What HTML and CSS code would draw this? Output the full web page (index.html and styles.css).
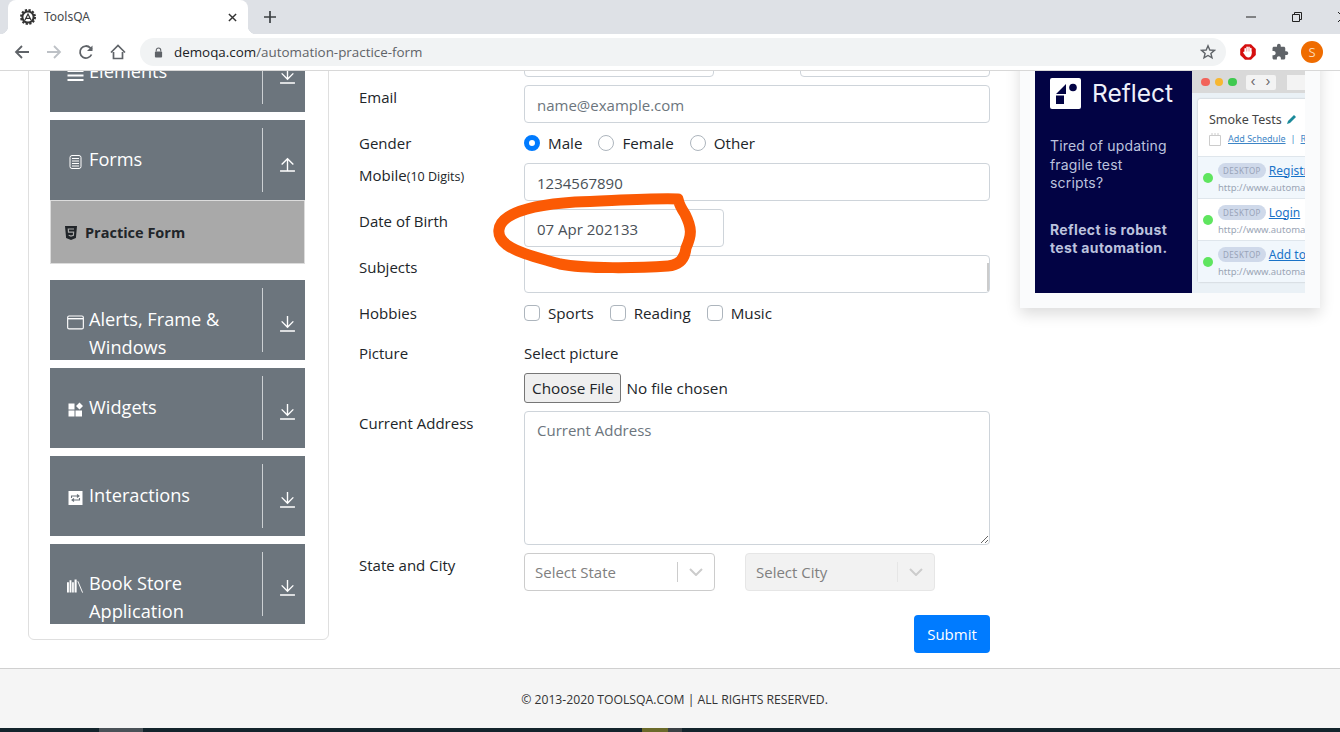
FILE: index.html
```html
<!doctype html>
<html lang="en">
<head>
	<meta charset="UTF-8">
	<title>ToolsQA</title>
	<link rel="stylesheet" href="styles.css">
</head>
<body>
	<div class="page">
		<div class="tabstrip">
			<div class="tab">
				<svg class="favicon" viewBox="0 0 16 16"><circle cx="8" cy="8" r="7" fill="none" stroke="#333" stroke-width="2" stroke-dasharray="2.2 1.5"/><circle cx="8" cy="8" r="5.6" fill="none" stroke="#333" stroke-width="2"/><path d="M5 11 8 5l3 6M6 9.300h4" fill="none" stroke="#333" stroke-width="1.200"/></svg>
				<span class="tab-title">ToolsQA</span>
				<svg class="tab-close" viewBox="0 0 10 10"><path d="M1 1l8 8M9 1l-8 8" stroke="#333" stroke-width="1.600"/></svg>
			</div>
			<svg class="new-tab" viewBox="0 0 12 12"><path d="M6 0v12M0 6h12" stroke="#3c4043" stroke-width="1.700"/></svg>
			<div class="winbtns">
				<svg class="winbtn" viewBox="0 0 12 12"><path d="M1 6h10" stroke="#222" stroke-width="1"/></svg>
				<svg class="winbtn" viewBox="0 0 12 12"><path d="M1.500 3.500h7v7h-7zM3.500 3.500v-2h7v7h-2" fill="none" stroke="#222" stroke-width="1"/></svg>
				<svg class="winbtn" viewBox="0 0 12 12"><path d="M1 1l10 10M11 1 1 11" stroke="#222" stroke-width="1"/></svg>
			</div>
		</div>
		<div class="toolbar">
			<span class="tool"><svg viewBox="0 0 16 16"><path d="M15 8H2M8 2 2 8l6 6" fill="none" stroke="#5f6368" stroke-width="1.800"/></svg></span>
			<span class="tool"><svg viewBox="0 0 16 16"><path d="M1 8h13M8 2l6 6-6 6" fill="none" stroke="#bdc1c6" stroke-width="1.800"/></svg></span>
			<span class="tool"><svg viewBox="0 0 16 16"><path d="M13.500 10.500A6 6 0 1 1 12.300 3.800L14 5.500" fill="none" stroke="#5f6368" stroke-width="1.800"/><path d="M14.500 1.500v5.500H9z" fill="#5f6368"/></svg></span>
			<span class="tool"><svg viewBox="0 0 16 16"><path d="M3.500 8v6.500h9V8M1 8.500 8 1.500l7 7" fill="none" stroke="#5f6368" stroke-width="1.700"/></svg></span>
			<div class="omnibox">
				<svg class="lock" viewBox="0 0 10 12"><path d="M2.500 5V3.500a2.500 2.500 0 0 1 5 0V5" fill="none" stroke="#5f6368" stroke-width="1.200"/><rect x="1" y="5" width="8" height="6.500" rx="1" fill="#5f6368"/></svg>
				<span class="url"><b>demoqa.com</b>/automation-practice-form</span>
				<svg class="star" viewBox="0 0 16 16"><path d="M8 1.800 9.800 6l4.600.4-3.500 3 1.100 4.500L8 11.500 4 13.900l1.100-4.500-3.500-3L6.200 6z" fill="none" stroke="#5f6368" stroke-width="1.400"/></svg>
			</div>
			<span class="tool"><svg viewBox="0 0 16 16"><path d="M5 .2h6L15.800 5v6L11 15.800H5L.2 11V5z" fill="#d50f0f"/><path d="M5.200 9V4.800M7.100 8V3.300M9 8V3.300M10.800 9V4.500" stroke="#fff" stroke-width="1.600" stroke-linecap="round"/><path d="M4.500 7.500h7.100V10c0 2-1.400 3.400-3.300 3.400-1.500 0-2.500-.8-3.100-1.900L3.200 8.800c-.4-.9.700-1.500 1.300-.7z" fill="#fff"/></svg></span>
			<span class="tool"><svg class="puzzle" viewBox="0 0 24 24"><path d="M20.500 11H19V7c0-1.100-.9-2-2-2h-4V3.500C13 2.120 11.880 1 10.500 1S8 2.120 8 3.500V5H4c-1.100 0-1.990.9-1.990 2v3.800H3.500c1.490 0 2.700 1.210 2.700 2.700s-1.210 2.700-2.700 2.700H2V20c0 1.100.9 2 2 2h3.800v-1.500c0-1.490 1.210-2.700 2.700-2.700s2.700 1.210 2.700 2.700V22H17c1.100 0 2-.9 2-2v-4h1.500c1.380 0 2.500-1.120 2.500-2.500S21.880 11 20.500 11z" fill="#5f6368"/></svg></span>
			<span class="tool"><span class="avatar">S</span></span>
		</div>

		<div class="viewport">
			<div class="main">
				<div class="sidebar">
					<div class="item">
						<div class="item-label">
							<svg class="item-icon" viewBox="0 0 16 16"><path d="M0 5h16M0 9.500h16M0 14h16" stroke="#fff" stroke-width="2"/></svg>
							<span>Elements</span>
						</div>
						<div class="item-side"><svg class="arrow" viewBox="0 0 16 16"><path d="M8 1v10M2.500 6 8 11.500 13.500 6M1 15h14" fill="none" stroke="#fff" stroke-width="1.300"/></svg></div>
					</div>
					<div class="item item-open">
						<div class="item-label">
							<svg class="item-icon" viewBox="0 0 16 16"><rect x="2.500" y="1.500" width="11" height="13" rx="2" fill="#6c757d" stroke="#fff"/><path d="M4.500 4.500h7M4.500 7h7M4.500 9.500h7M4.500 12h7" stroke="#fff"/></svg>
							<span>Forms</span>
						</div>
						<div class="item-side"><svg class="arrow" viewBox="0 0 16 16"><path d="M8 15V4M2.500 9 8 3.500 13.500 9M1 15h14" fill="none" stroke="#fff" stroke-width="1.300"/></svg></div>
					</div>
					<div class="subitem">
						<svg class="sub-icon" viewBox="0 0 12 14"><path d="M0 0h12l-1.100 12L6 14l-4.900-2z" fill="#212529"/><path d="M9 3H3.300l.2 3.200H8.600l-.2 3L6 10l-2.300-.8" fill="none" stroke="#a9a9a9" stroke-width="1.200"/></svg>
						<span>Practice Form</span>
					</div>
					<div class="item">
						<div class="item-label">
							<svg class="item-icon" viewBox="0 0 18 16"><rect x=".7" y="1.700" width="16.600" height="13.600" rx="1.500" fill="none" stroke="#fff" stroke-width="1.200"/><path d="M1 4.500h16" stroke="#fff" stroke-width="1.500"/></svg>
							<span>Alerts, Frame &amp; Windows</span>
						</div>
						<div class="item-side"><svg class="arrow" viewBox="0 0 16 16"><path d="M8 1v10M2.500 6 8 11.500 13.500 6M1 15h14" fill="none" stroke="#fff" stroke-width="1.300"/></svg></div>
					</div>
					<div class="item">
						<div class="item-label">
							<svg class="item-icon" viewBox="0 0 16 16"><path d="M1 1.500h6v6H1zM1 8.500h6v6H1zM8 8.500h6.500v6H8zM12 .5 15.500 4 12 7.500 8.500 4z" fill="#fff"/></svg>
							<span>Widgets</span>
						</div>
						<div class="item-side"><svg class="arrow" viewBox="0 0 16 16"><path d="M8 1v10M2.500 6 8 11.500 13.500 6M1 15h14" fill="none" stroke="#fff" stroke-width="1.300"/></svg></div>
					</div>
					<div class="item">
						<div class="item-label">
							<svg class="item-icon" viewBox="0 0 16 16"><rect x="1" y="1" width="14" height="14" fill="#fff"/><path d="M4 8V6h7M9.500 4.500 11.500 6 9.500 7.500M12 8v2H5M6.500 8.500 4.500 10l2 1.500" fill="none" stroke="#6c757d" stroke-width="1.100"/></svg>
							<span>Interactions</span>
						</div>
						<div class="item-side"><svg class="arrow" viewBox="0 0 16 16"><path d="M8 1v10M2.500 6 8 11.500 13.500 6M1 15h14" fill="none" stroke="#fff" stroke-width="1.300"/></svg></div>
					</div>
					<div class="item">
						<div class="item-label">
							<svg class="item-icon" viewBox="0 0 18 16"><path d="M0 4h2v11H0zM2.700 2h2v13h-2zM5.400 4h1.800v11H5.400zM8 1h2.200v14H8z" fill="#fff"/><path d="M11.500 3l5 12" stroke="#fff" stroke-width="1"/></svg>
							<span>Book Store Application</span>
						</div>
						<div class="item-side"><svg class="arrow" viewBox="0 0 16 16"><path d="M8 1v10M2.500 6 8 11.500 13.500 6M1 15h14" fill="none" stroke="#fff" stroke-width="1.300"/></svg></div>
					</div>
				</div>

				<div class="form">
					<span></span>
					<div class="split">
						<input class="field" type="text">
						<input class="field" type="text">
					</div>

					<label class="row-label">Email</label>
					<input class="field" type="text" placeholder="name@example.com">

					<label class="row-label">Gender</label>
					<div class="choices">
						<span class="choice"><i class="radio radio-on"></i>Male</span>
						<span class="choice"><i class="radio"></i>Female</span>
						<span class="choice"><i class="radio"></i>Other</span>
					</div>

					<label class="row-label">Mobile<small>(10 Digits)</small></label>
					<input class="field" type="text" value="1234567890">

					<label class="row-label">Date of Birth</label>
					<input class="field field-date" type="text" value="07 Apr 202133">

					<label class="row-label">Subjects</label>
					<div class="subjects"><i class="subjects-bar"></i></div>

					<label class="row-label">Hobbies</label>
					<div class="choices">
						<span class="choice"><i class="check"></i>Sports</span>
						<span class="choice"><i class="check"></i>Reading</span>
						<span class="choice"><i class="check"></i>Music</span>
					</div>

					<label class="row-label row-picture">Picture</label>
					<div class="picture row-picture">
						<div>Select picture</div>
						<input class="file" type="file">
					</div>

					<label class="row-label">Current Address</label>
					<textarea class="field area" placeholder="Current Address"></textarea>

					<label class="row-label">State and City</label>
					<div class="selects">
						<div class="select">
							<span class="select-text">Select State</span>
							<i class="select-bar"></i>
							<svg class="chevron" viewBox="0 0 14 8"><path d="M1 1l6 6 6-6" fill="none" stroke="#ccc" stroke-width="2"/></svg>
						</div>
						<div class="select select-off">
							<span class="select-text">Select City</span>
							<i class="select-bar"></i>
							<svg class="chevron" viewBox="0 0 14 8"><path d="M1 1l6 6 6-6" fill="none" stroke="#ccc" stroke-width="2"/></svg>
						</div>
					</div>

					<div class="submit-row"><button class="submit">Submit</button></div>
				</div>

				<div class="ad">
					<div class="ad-inner">
						<div class="ad-left">
							<div class="ad-brand">
								<svg class="ad-logo" viewBox="0 0 31 31"><rect width="31" height="31" rx="2" fill="#fff"/><path d="M6 16 16 6v10zM6 17.500h8V26H6z" fill="#020344"/><circle cx="23" cy="9.500" r="3.800" fill="#020344"/></svg>
								<span>Reflect</span>
							</div>
							<p class="ad-text">Tired of updating fragile test scripts?</p>
							<p class="ad-text ad-bold">Reflect is robust test automation.</p>
						</div>
						<div class="ad-shot">
							<div class="shot-bar">
								<i class="dot dot-r"></i><i class="dot dot-y"></i><i class="dot dot-g"></i>
								<span class="shot-nav"><b>‹</b><b>›</b></span>
								<span class="shot-side"></span>
							</div>
							<div class="shot-card">
								<div class="shot-head">
									<div class="shot-title">Smoke Tests <svg class="pencil" viewBox="0 0 10 10"><path d="M0 10l1-3 6-6 2 2-6 6z" fill="#1b8a9a"/></svg></div>
									<div class="shot-links"><svg class="cal" viewBox="0 0 12 13"><path d="M.5 2.500h11v10H.5z" fill="#fff" stroke="#ccc"/><path d="M3 0v2M6 0v2M9 0v2" stroke="#ccc"/></svg><u>Add Schedule</u><span>|</span><u>Run</u></div>
								</div>
								<div class="shot-row shot-tint">
									<i class="pass"></i>
									<div><div><span class="badge">DESKTOP</span><u class="shot-link">Registration</u></div><div class="shot-url">http://www.automationpractice.com</div></div>
								</div>
								<div class="shot-row">
									<i class="pass"></i>
									<div><div><span class="badge">DESKTOP</span><u class="shot-link">Login</u></div><div class="shot-url">http://www.automationpractice.com</div></div>
								</div>
								<div class="shot-row shot-tint">
									<i class="pass"></i>
									<div><div><span class="badge">DESKTOP</span><u class="shot-link">Add to cart</u></div><div class="shot-url">http://www.automationpractice.com</div></div>
								</div>
							</div>
						</div>
					</div>
				</div>
			</div>
		</div>

		<div class="footer">© 2013-2020 TOOLSQA.COM | ALL RIGHTS RESERVED.</div>
		<div class="taskbar"><i class="task-a"></i><i class="task-b"></i><i class="task-c"></i></div>

		<!-- pen mark drawn on the screenshot -->
		<svg class="scribble" viewBox="0 0 1340 732"><path d="M678 199C650 198 610 201 575 202C545 204 520 209 508 217C497 224 495 236 507 245C520 254 540 258 560 264C585 269 640 268 668 266C680 265 685 258 686 248C692 235 692 228 685 214C681 208 679 204 678 199Z" fill="none" stroke="#fb5a04" stroke-width="11" stroke-linejoin="round"/></svg>
	</div>
</body>
</html>
```

FILE: styles.css
```css
*{
	box-sizing: border-box;
}
html,body{
	margin: 0;
	padding: 0;
	height: 100%;
	overflow: hidden;
}
body{
	font-family: "Open Sans", "Noto Sans", sans-serif;
	font-size: 15px;
	line-height: 24px;
	color: #212529;
	background: #fff;
}
i{
	display: block;
}
.page{
	position: relative;
	height: 732px;
	display: flex;
	flex-direction: column;
	overflow: hidden;
}

/* browser chrome */
.tabstrip{
	height: 34px;
	flex: none;
	background: #dee1e6;
	display: flex;
	align-items: center;
	padding-left: 8px;
}
.tab{
	position: relative;
	width: 240px;
	height: 34px;
	background: #fff;
	border-radius: 8px 8px 0 0;
	display: flex;
	align-items: center;
	padding-left: 12px;
	padding-right: 11px;
}
.tab::before,.tab::after{
	content: "";
	position: absolute;
	bottom: 0;
	width: 8px;
	height: 8px;
}
.tab::before{
	left: -8px;
	background: radial-gradient(circle at 0 0, #dee1e6 8px, #fff 8.5px);
}
.tab::after{
	right: -8px;
	background: radial-gradient(circle at 100% 0, #dee1e6 8px, #fff 8.5px);
}
.favicon{
	width: 16px;
	height: 16px;
	flex: none;
}
.tab-title{
	font-family: "Noto Sans", sans-serif;
	font-size: 12px;
	color: #45484c;
	margin-left: 8px;
	flex: 1;
}
.tab-close{
	width: 9px;
	height: 9px;
}
.new-tab{
	width: 12px;
	height: 12px;
	margin-left: 16px;
}
.winbtns{
	margin-left: auto;
	display: flex;
	align-items: center;
	margin-right: -9px;
	gap: 34px;
}
.winbtn{
	width: 12px;
	height: 12px;
}
.toolbar{
	height: 37px;
	flex: none;
	background: #fff;
	border-bottom: 1px solid #d8d8d8;
	display: flex;
	align-items: center;
	padding: 0 12px 0 6px;
}
.tool{
	width: 32px;
	height: 28px;
	flex: none;
	display: flex;
	align-items: center;
	justify-content: center;
}
.tool svg{
	width: 16px;
	height: 16px;
}
.tool .puzzle{
	width: 18px;
	height: 18px;
}
.avatar{
	width: 22px;
	height: 22px;
	border-radius: 50%;
	background: #ef6c00;
	color: #fbd9b5;
	font-size: 13px;
	line-height: 22px;
	text-align: center;
}
.omnibox{
	flex: 1;
	height: 28px;
	margin: 0 6px;
	border-radius: 14px;
	background: #f1f3f4;
	display: flex;
	align-items: center;
	padding: 0 10px 0 14px;
}
.lock{
	width: 9px;
	height: 11px;
}
.url{
	margin-left: 11px;
	font-size: 13.400px;
	color: #5f6368;
	flex: 1;
}
.url b{
	font-weight: 400;
	color: #202124;
}
.star{
	width: 16px;
	height: 16px;
}

/* page */
.viewport{
	flex: 1;
	overflow: hidden;
}
.main{
	display: flex;
	align-items: flex-start;
	margin-top: -40px;
	padding-left: 28px;
}
.sidebar{
	width: 301px;
	flex: none;
	border: 1px solid #dfdfdf;
	border-radius: 6px;
	padding: 0 23px 15px 21px;
}
.item{
	height: 80px;
	margin-bottom: 8px;
	background: #6c757d;
	color: #fff;
	display: flex;
	overflow: hidden;
	font-size: 18.200px;
	line-height: 28px;
}
.item:last-child{
	margin-bottom: 0;
}
.item-open{
	margin-bottom: 0;
}
.item-label{
	flex: 1;
	display: flex;
	align-items: flex-start;
	padding: 25px 8px 0 17px;
}
.item-label span{
	margin-left: 5px;
}
.item-icon{
	width: 17px;
	height: 16px;
	flex: none;
	margin-top: 9px;
}
.item-side{
	width: 43px;
	height: 64px;
	margin-top: 8px;
	flex: none;
	border-left: 1px solid #ccd0d3;
	padding: 27px 0 0 16px;
}
.arrow{
	width: 17px;
	height: 17px;
	display: block;
}
.subitem{
	height: 64px;
	margin-bottom: 16px;
	background: #a9a9a9;
	border: 1px solid #dcdcdc;
	display: flex;
	align-items: center;
	padding: 2px 0 0 14px;
	font-size: 14.500px;
	font-weight: 700;
}
.sub-icon{
	width: 12px;
	height: 14px;
	margin-right: 8px;
}

/* form */
.form{
	width: 631px;
	margin-left: 30px;
	flex: none;
	padding-top: 8px;
	display: grid;
	grid-template-columns: 165px 466px;
	row-gap: 8px;
	align-items: start;
}
.row-label small{
	font-size: 12.500px;
}
.field{
	width: 100%;
	height: 38px;
	padding: 7px 12px 5px;
	border: 1px solid #ced4da;
	border-radius: 4px;
	font: inherit;
	color: #495057;
	background: #fff;
	display: block;
}
.field::placeholder{
	color: #6c757d;
	opacity: 1;
}
.field-date{
	width: 200px;
}
.split{
	display: flex;
	justify-content: space-between;
}
.split .field{
	width: 190px;
}
.choices{
	display: flex;
	gap: 16px;
	font-size: 15.200px;
}
.choice{
	display: flex;
	align-items: center;
	gap: 8px;
}
.radio,.check{
	width: 16px;
	height: 16px;
	background: #fff;
	border: 1px solid #adb5bd;
	border-radius: 50%;
}
.check{
	border-radius: 4px;
}
.radio-on{
	border: 5px solid #007bff;
}
.subjects{
	height: 38px;
	border: 1px solid #ced4da;
	border-radius: 4px;
	display: flex;
	justify-content: flex-end;
	padding-top: 7px;
}
.subjects-bar{
	width: 2px;
	height: 28px;
	background: #ccc;
}
.row-picture{
	margin-top: 8px;
}
.file{
	display: block;
	margin-top: 8px;
	height: 30px;
	font: inherit;
	font-size: 15.300px;
	line-height: 28px;
}
.file::file-selector-button{
	height: 30px;
	padding: 0 7px 2px;
	margin-right: 5px;
	border: 1px solid #767676;
	border-radius: 3px;
	background: #efefef;
	color: #212529;
	font: inherit;
}
.area{
	height: 134px;
	padding: 6px 12px;
	resize: vertical;
}
.selects{
	display: flex;
	gap: 30px;
}
.select{
	width: 191px;
	height: 38px;
	border: 1px solid #ccc;
	border-radius: 4px;
	display: flex;
	align-items: center;
	padding: 0 11px 0 10px;
	color: #808080;
}
.select-off{
	width: 190px;
	background: #f2f2f2;
	border-color: #e6e6e6;
}
.select-text{
	flex: 1;
}
.select-bar{
	width: 1px;
	height: 20px;
	background: #ccc;
	margin-right: 11px;
}
.select-off .select-bar{
	background: #e6e6e6;
}
.chevron{
	width: 14px;
	height: 8px;
}
.submit-row{
	grid-column: 1 / 3;
	display: flex;
	justify-content: flex-end;
	margin-top: 16px;
}
.submit{
	width: 76px;
	height: 38px;
	border: 0;
	border-radius: 4px;
	background: #007bff;
	color: #fff;
	font: inherit;
}

/* ad */
.ad{
	width: 300px;
	height: 277px;
	margin-left: 30px;
	flex: none;
	padding: 0 15px 15px;
	background: #fafbfc;
	box-shadow: 0 6px 14px rgba(0,0,0,.14);
}
.ad-inner{
	height: 100%;
	display: flex;
	overflow: hidden;
	font-family: "Inter", sans-serif;
}
.ad-left{
	width: 157px;
	flex: none;
	background: #020344;
	padding: 46px 22px 0 15px;
}
.ad-brand{
	display: flex;
	align-items: center;
	color: #eef0fa;
	font-size: 24.500px;
	font-weight: 400;
	line-height: 31px;
	white-space: nowrap;
}
.ad-brand span{
	padding-top: 1px;
}
.ad-logo{
	width: 31px;
	height: 31px;
	margin-right: 11px;
	flex: none;
}
.ad-text{
	margin: 28px 0 0;
	color: #bcc2de;
	font-size: 14px;
	letter-spacing: .18px;
	line-height: 18.500px;
}
.ad-bold{
	margin-top: 28px;
	font-weight: 700;
	letter-spacing: .35px;
}
.ad-shot{
	flex: 1;
	min-width: 0;
	background: #eaf1f6;
	overflow: hidden;
	padding-top: 40px;
}
.shot-bar{
	height: 22px;
	background: #d9d9d9;
	margin-bottom: 6px;
	display: flex;
	align-items: center;
	padding-left: 9px;
	gap: 5px;
}
.dot{
	width: 8.500px;
	height: 8.500px;
	border-radius: 50%;
	flex: none;
}
.dot-r{
	background: #f2635a;
}
.dot-y{
	background: #f7b731;
}
.dot-g{
	background: #3fc94f;
}
.shot-nav{
	display: flex;
	margin-left: 4px;
	background: #f3f3f3;
	border-radius: 2px;
	flex: none;
}
.shot-nav b{
	width: 15px;
	height: 15px;
	font-weight: 400;
	font-size: 13px;
	line-height: 13px;
	text-align: center;
	color: #666;
}
.shot-side{
	width: 24px;
	height: 15px;
	margin-left: 6px;
	background: #f3f3f3;
	flex: none;
}
.shot-card{
	width: 200px;
	margin-left: 6px;
	background: #fff;
	border-radius: 2px;
	box-shadow: 0 0 2px rgba(0,0,0,.25);
	font-family: "Noto Sans", sans-serif;
	white-space: nowrap;
}
.shot-head{
	height: 57px;
	padding: 12px 0 0 11px;
}
.shot-title{
	font-size: 12.500px;
	line-height: 18px;
	color: #444;
}
.pencil{
	width: 10px;
	height: 10px;
	margin-left: 2px;
}
.shot-links{
	display: flex;
	align-items: center;
	gap: 5px;
	margin-top: 3px;
	font-size: 9px;
	line-height: 14px;
	color: #3d85c6;
}
.cal{
	width: 12px;
	height: 13px;
	margin-right: 2px;
}
.shot-row{
	height: 42px;
	border-top: 1px solid #dfe6ec;
	display: flex;
	align-items: center;
	padding: 0 0 4px 5px;
	gap: 5px;
}
.shot-tint{
	background: #f1f7fc;
}
.pass{
	width: 10px;
	height: 10px;
	margin-top: 4px;
	border-radius: 50%;
	background: #5fe55f;
	flex: none;
}
.badge{
	display: inline-block;
	padding: 0 5px;
	height: 15px;
	line-height: 15px;
	border-radius: 7.500px;
	background: #cfd9ea;
	color: #98a3b8;
	font-size: 8px;
	letter-spacing: .4px;
	margin-right: 3px;
	vertical-align: middle;
}
.shot-link{
	color: #1a73c8;
	font-size: 12px;
	line-height: 16px;
}
.shot-url{
	font-size: 9.500px;
	line-height: 14px;
	color: #9aa5b5;
}

/* footer */
.footer{
	height: 60px;
	flex: none;
	border-top: 1px solid #d0d0d0;
	background: #f5f5f5;
	text-align: center;
	padding-left: 9px;
	font-size: 12.200px;
	line-height: 61px;
	color: #333;
}
.taskbar{
	height: 4px;
	flex: none;
	background: #13242c;
	display: flex;
}
.task-a{
	width: 44px;
	margin-left: 99px;
	background: #4a5258;
}
.task-b{
	width: 26px;
	margin-left: 499px;
	background: #6b6a2a;
}
.task-c{
	width: 14px;
	background: #3b4145;
}

.scribble{
	position: absolute;
	left: 0;
	top: 0;
	width: 1340px;
	height: 732px;
	pointer-events: none;
}
```
